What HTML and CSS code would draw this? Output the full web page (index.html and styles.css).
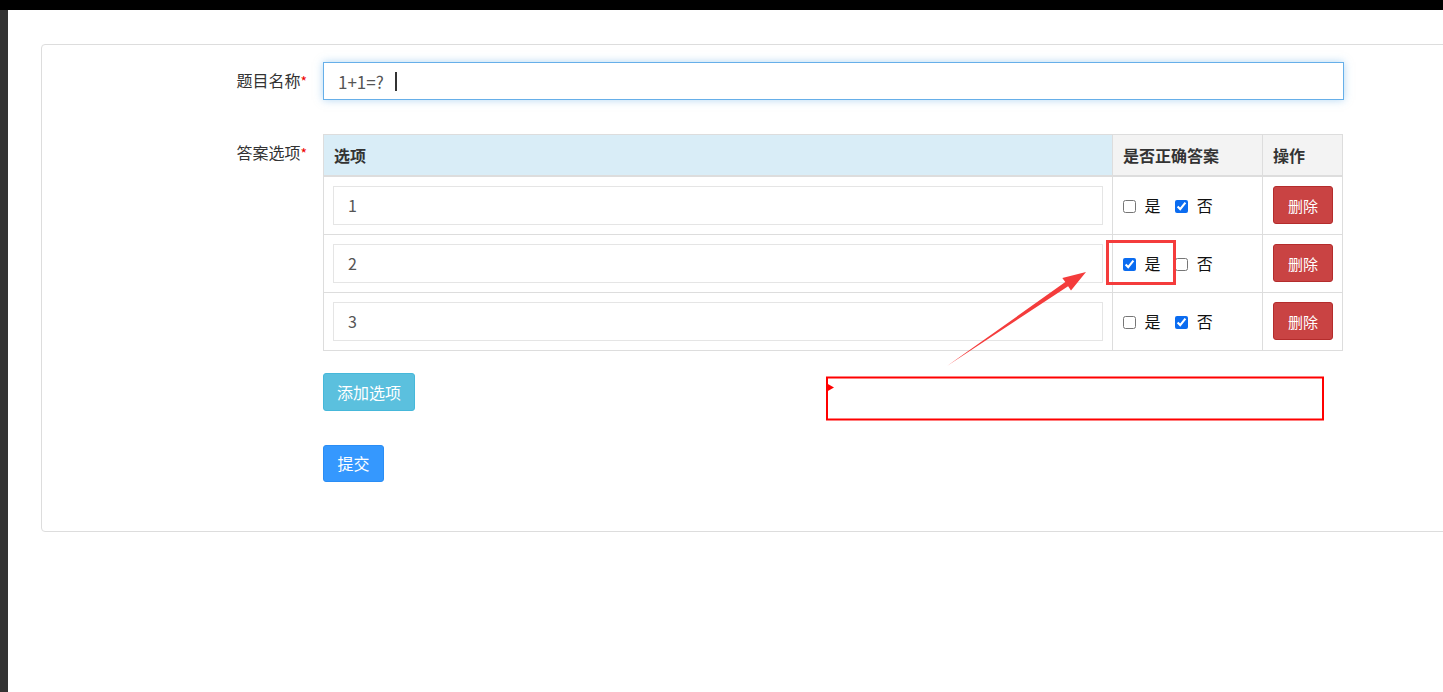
FILE: index.html
```html
<!DOCTYPE html>
<html lang="zh-CN">
<head>
    <meta charset="UTF-8">
    <meta name="viewport" content="width=device-width, initial-scale=1.0">
    <link rel="stylesheet" href="styles.css">
    <title>添加题目</title>
</head>
<body>
    <div class="topbar"></div>
    <div class="layout">
        <div class="sidebar"></div>
        <main class="content">
            <div class="panel">
                <div class="form-row">
                    <label class="form-label">题目名称<span class="req">*</span></label>
                    <div class="form-field field-title">
                        <input class="title-input" type="text" value="1+1=?">
                        <span class="caret"></span>
                    </div>
                </div>

                <div class="form-row row-options">
                    <label class="form-label">答案选项<span class="req">*</span></label>
                    <div class="form-field">
                        <table class="options">
                            <thead>
                                <tr>
                                    <th class="col-option">选项</th>
                                    <th class="col-correct">是否正确答案</th>
                                    <th class="col-action">操作</th>
                                </tr>
                            </thead>
                            <tbody>
                                <tr>
                                    <td><input class="option-input" type="text" value="1"></td>
                                    <td>
                                        <label class="check"><input type="checkbox"> 是</label>
                                        <label class="check"><input type="checkbox" checked> 否</label>
                                    </td>
                                    <td class="cell-action"><button class="btn btn-danger">删除</button></td>
                                </tr>
                                <tr>
                                    <td><input class="option-input" type="text" value="2"></td>
                                    <td>
                                        <label class="check"><input type="checkbox" checked> 是</label>
                                        <label class="check"><input type="checkbox"> 否</label>
                                    </td>
                                    <td class="cell-action"><button class="btn btn-danger">删除</button></td>
                                </tr>
                                <tr>
                                    <td><input class="option-input" type="text" value="3"></td>
                                    <td>
                                        <label class="check"><input type="checkbox"> 是</label>
                                        <label class="check"><input type="checkbox" checked> 否</label>
                                    </td>
                                    <td class="cell-action"><button class="btn btn-danger">删除</button></td>
                                </tr>
                            </tbody>
                        </table>

                        <button class="btn btn-info btn-add">添加选项</button>
                        <div>
                            <button class="btn btn-primary btn-submit">提交</button>
                        </div>
                    </div>
                </div>
            </div>
        </main>
    </div>

    <!-- screenshot annotations -->
    <svg class="annotations" width="1443" height="692" viewBox="0 0 1443 692">
        <rect x="1107.5" y="241.5" width="67" height="42" fill="none" stroke="#f43c3c" stroke-width="3"/>
        <polygon points="947,366 1065.3,282.1 1062.3,278 1086,272 1071,290.5 1068.1,286.3" fill="#f43c3c"/>
        <rect x="827" y="377.5" width="496" height="42" fill="none" stroke="#ff0000" stroke-width="2"/>
        <polygon points="827,383.5 834,387.5 827,391.5" fill="#ff0000"/>
    </svg>
</body>
</html>
```

FILE: styles.css
```css
body {
    margin: 0;
    background: #fff;
    font-family: "Microsoft YaHei", "Noto Sans CJK SC", "Liberation Sans", sans-serif;
    color: #333;
    overflow: hidden;
    height: 692px;
}

.topbar {
    height: 10px;
    background: #000;
}

.layout {
    display: flex;
    height: 682px;
}

.sidebar {
    width: 8px;
    background: #333;
    flex-shrink: 0;
}

.content {
    flex: 1;
    padding: 34px 0 0 33px;
    overflow: hidden;
}

.panel {
    width: 1440px;
    height: 469px;
    border: 1px solid #ddd;
    border-radius: 4px;
    padding-top: 17px;
    box-sizing: content-box;
}

.form-row {
    display: flex;
}

.row-options {
    margin-top: 34px;
}

.form-label {
    width: 265px;
    padding-right: 16px;
    text-align: right;
    padding-top: 6px;
    line-height: 24px;
    font-size: 16px;
    color: #333;
}

.req {
    color: #e00;
    font-size: 14px;
}

.form-field {
    width: 1021px;
}

.field-title {
    position: relative;
}

.title-input {
    display: block;
    width: 100%;
    height: 38px;
    box-sizing: border-box;
    border: 1px solid #66afe9;
    box-shadow: 0 0 8px rgba(102, 175, 233, 0.5);
    outline: none;
    padding: 0 14px;
    font-family: inherit;
    font-size: 17px;
    color: #555;
}

.caret {
    position: absolute;
    left: 72px;
    top: 10px;
    width: 2px;
    height: 19px;
    background: #333;
}

.options {
    width: 1020px;
    border-collapse: collapse;
    border: 1px solid #ddd;
}

.options th {
    height: 40px;
    padding: 0 10px;
    text-align: left;
    font-size: 16px;
    font-weight: bold;
    color: #333;
    background: #f3f3f3;
    border: 1px solid #ddd;
    border-bottom: 2px solid #ddd;
}

.options th.col-option {
    background: #d9edf7;
}

.col-correct {
    width: 129px;
}

.col-action {
    width: 59px;
}

.options td {
    height: 58px;
    padding: 0 9px;
    border: 1px solid #ddd;
    box-sizing: border-box;
}

.options td.cell-action {
    padding: 0 9px 0 10px;
}

.option-input {
    display: block;
    width: 100%;
    height: 39px;
    box-sizing: border-box;
    border: 1px solid #e5e5e5;
    padding: 0 14px;
    font-family: inherit;
    font-size: 16px;
    color: #555;
    outline: none;
}

.check {
    font-size: 16px;
    color: #111;
    margin-right: 10px;
    white-space: nowrap;
}

.check input {
    width: 13px;
    height: 13px;
    margin: 0 5px 0 1px;
    vertical-align: -1px;
    accent-color: #0b6cf0;
}

.btn {
    font-family: inherit;
    font-size: 15px;
    color: #fff;
    border-radius: 3px;
    cursor: pointer;
    border: 1px solid transparent;
}

.btn-danger {
    width: 60px;
    height: 38px;
    background: #c94343;
    border-color: #b42c2c;
}

.btn-info {
    background: #5bc0de;
    border-color: #46b8da;
    font-size: 16px;
}

.btn-add {
    margin-top: 22px;
    width: 92px;
    height: 38px;
}

.btn-primary {
    background: #3598fe;
    border-color: #2a8df5;
    font-size: 16px;
}

.btn-submit {
    margin-top: 34px;
    width: 61px;
    height: 37px;
}

.annotations {
    position: absolute;
    top: 0;
    left: 0;
    pointer-events: none;
}
```
